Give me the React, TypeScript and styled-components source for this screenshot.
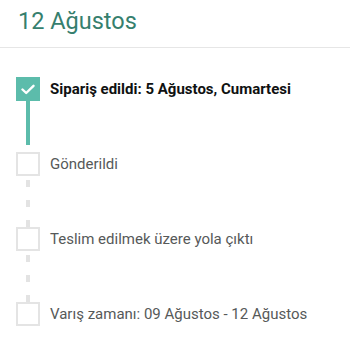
import React from "react";
import styled, { createGlobalStyle } from "styled-components";

const Global = createGlobalStyle`
  html, body { margin: 0; padding: 0; background: #fff; }
  body { font-family: Roboto, "Noto Sans", sans-serif; overflow: hidden; }
`;

const Page = styled.div`
  width: 350px;
  height: 350px;
  overflow: hidden;
  display: flex;
  flex-direction: column;
`;

const Header = styled.div`
  border-bottom: 1px solid #e6e6e6;
  padding: 0 0 9px 18px;
`;

const Title = styled.div`
  margin-top: -30px;
  font-size: 23.5px;
  line-height: 34px;
  color: #367f6e;
`;

const Steps = styled.div`
  display: flex;
  flex-direction: column;
  padding: 29px 0 0 16px;
`;

const Step = styled.div`
  display: flex;
  gap: 10px;
  height: 75px;
`;

const Marker = styled.div`
  width: 24px;
  display: flex;
  flex-direction: column;
  align-items: center;
`;

const Box = styled.div<{ $done?: boolean }>`
  width: 24px;
  height: 24px;
  box-sizing: border-box;
  flex: none;
  display: flex;
  align-items: center;
  justify-content: center;
  background: ${(p) => (p.$done ? "#5cbcab" : "#fff")};
  border: ${(p) => (p.$done ? "none" : "2px solid #e4e4e4")};
`;

const Connector = styled.div<{ $done?: boolean }>`
  width: 4px;
  flex: 1;
  margin-bottom: ${(p) => (p.$done ? "7px" : "0")};
  background: ${(p) =>
    p.$done
      ? "#5cbcab"
      : "repeating-linear-gradient(to bottom, transparent 0 4px, #e3e3e3 4px 11px, transparent 11px 20px)"};
`;

const Label = styled.div<{ $done?: boolean }>`
  font-size: 15px;
  line-height: 24px;
  font-weight: ${(p) => (p.$done ? 700 : 400)};
  color: ${(p) => (p.$done ? "#0f1111" : "#565959")};
  white-space: nowrap;
`;

const Check = () => (
  <svg width="14" height="11" viewBox="0 0 14 11">
    <path d="M1.5 5.5 L5.2 9 L12.5 1.8" fill="none" stroke="#fff" strokeWidth="2.4" strokeLinecap="round" strokeLinejoin="round" />
  </svg>
);

const steps = [
  { label: "Sipariş edildi: 5 Ağustos, Cumartesi", done: true },
  { label: "Gönderildi", done: false },
  { label: "Teslim edilmek üzere yola çıktı", done: false },
  { label: "Varış zamanı: 09 Ağustos - 12 Ağustos", done: false },
];

export default function App() {
  return (
    <Page>
      <Global />
      <Header>
        <Title>
          09 Ağustos -<br />
          12 Ağustos
        </Title>
      </Header>
      <Steps>
        {steps.map((s, i) => (
          <Step key={i}>
            <Marker>
              <Box $done={s.done}>{s.done && <Check />}</Box>
              {i < steps.length - 1 && <Connector $done={s.done} />}
            </Marker>
            <Label $done={s.done}>{s.label}</Label>
          </Step>
        ))}
      </Steps>
    </Page>
  );
}
